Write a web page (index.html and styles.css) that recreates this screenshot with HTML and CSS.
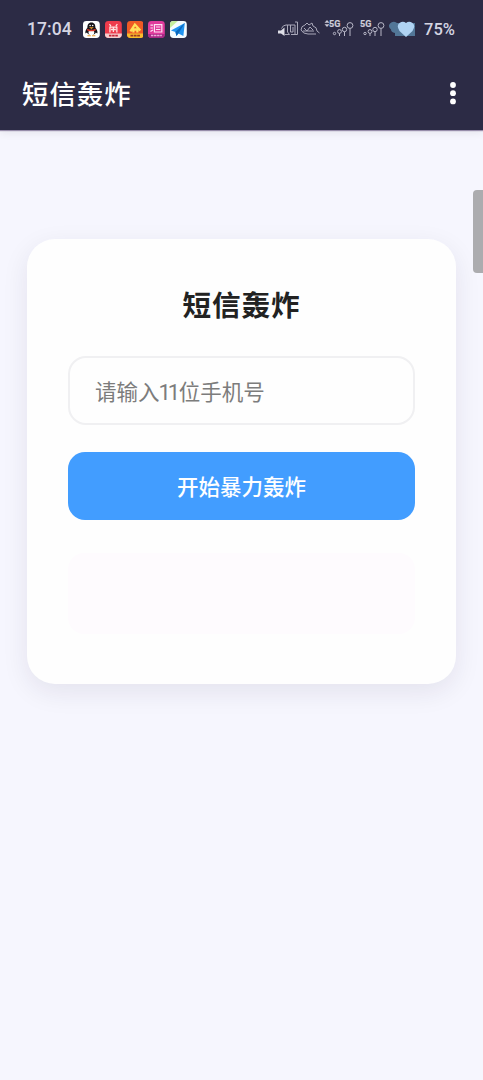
FILE: index.html
```
<!DOCTYPE html>
<html lang="zh-CN">
<head>
<meta charset="utf-8">
<title>短信轰炸</title>
<link rel="stylesheet" href="styles.css">
</head>
<body>
<header class="top">
  <div class="status">
    <span class="clock">17:04</span>
    <div class="apps">
      <svg class="app" viewBox="0 0 17 17"><rect width="17" height="17" rx="3.5" fill="#fff"/><path d="M8.500 1.500C5.500 1.500 4.300 4 4.500 6.500C3 8.500 1.900 10.500 2.500 12.500L4 11.500C5 14.800 12 14.800 13 11.500L14.500 12.500C15.100 10.500 14 8.500 12.500 6.500C12.700 4 11.500 1.500 8.500 1.500Z" fill="#17151a"/><ellipse cx="8.500" cy="11.500" rx="2.900" ry="2.700" fill="#fff"/><circle cx="7.200" cy="4.500" r=".8" fill="#fff"/><circle cx="9.800" cy="4.500" r=".8" fill="#fff"/><path d="M4.200 7.800Q8.500 10 12.800 7.800V9.500Q8.500 11.200 4.200 9.500Z" fill="#d8352b"/><path d="M6 6.300H11L8.500 8Z" fill="#f4a22b"/><path d="M4.500 14.800H7.900M9.100 14.800H12.500" stroke="#ed9a28" stroke-width="1.200"/></svg>
      <svg class="app" viewBox="0 0 17 17"><rect width="17" height="17" rx="3.500" fill="#ee3b4c"/><path d="M0 12.500H17V13.500Q17 17 13.500 17H3.500Q0 17 0 13.500Z" fill="#f5cfcf"/><path d="M4.500 3L6 5M12.500 3L11 5M5 5.500V11.500M12 5.500V11.500M5 6H12M6 8.500H11M8.500 6V11" stroke="#ffe3e1" stroke-width="1.300" fill="none"/><path d="M4 14.700H13" stroke="#c52234" stroke-width="2" stroke-dasharray="2.600 .6"/></svg>
      <svg class="app" viewBox="0 0 17 17"><rect width="17" height="17" rx="3.500" fill="#ee5a25"/><path d="M0 12.500H17V13.500Q17 17 13.500 17H3.500Q0 17 0 13.500Z" fill="#f7bd2c"/><path d="M3.500 10.500L8 3.500L13.500 9.500M6.500 11.500V8.500H10.500V11.500" stroke="#ffe05a" stroke-width="2.300" fill="none"/><path d="M3.500 14.700H13.500" stroke="#9d3821" stroke-width="2" stroke-dasharray="2.800 .6"/></svg>
      <svg class="app" viewBox="0 0 17 17"><rect width="17" height="17" rx="3.500" fill="#e03a9c"/><path d="M0 13H17V13.500Q17 17 13.500 17H3.500Q0 17 0 13.500Z" fill="#a82886"/><path d="M2.500 4H5M2.500 7H5M2.500 10.500L5 9M6.500 3.500H14V11H6.500ZM8 6H12.500M8 8.500H12.500" stroke="#ffe0f3" stroke-width="1.200" fill="none"/><path d="M3 14.500H14" stroke="#f1a8d8" stroke-width="1.500" stroke-dasharray="2.500 .6"/></svg>
      <svg class="app" viewBox="0 0 17 17"><rect width="17" height="17" rx="3.500" fill="#f5fcff"/><path d="M0 7V3.500Q0 0 3.500 0H8Z" fill="#c5ed9d"/><path d="M1 9.500L15 2L13.500 15L8.500 12.500L6.500 15L5.500 11Z" fill="#2093ef"/><path d="M5.500 11L15 2L8.500 12.500L6.500 15Z" fill="#0b68bd"/></svg>
    </div>
    <div class="signals">
      <svg class="mute" width="44" height="20" viewBox="0 0 44 20" fill="none" stroke="#aaa9ba" stroke-width="1"><path d="M1 11.500H4L7.500 8.500V17L4 14.500H1Z" fill="#dedee7" stroke="none"/><path d="M4.500 9.500Q6 6 9 6H18V15.500H14M12.500 15.500H7.500M10.500 6V13L12.500 15.500M13.500 6V13H16V8M18 3H20.500V15.500M14 15.500H20.500"/><path d="M24 11Q24 7 28 6L30 4L32 6L35 4L36 7Q40 8 40 12L42.500 14M24 11Q26 15 31 15H39M27 9L30 12L33 8L36 11M26 12H37"/></svg>
      <svg width="31" height="20" viewBox="0 0 31 20" fill="none" stroke="#b8b7c7"><path d="M.5 3.800L3 1L5.500 3.800ZM.5 5.200L3 8L5.500 5.200Z" fill="#c9c9d6" stroke="none"/><text class="net" x="5" y="8">5G</text><circle cx="10.500" cy="14.500" r="1.200"/><circle cx="15.500" cy="12.500" r="1.900"/><path d="M15.500 14.400V17"/><circle cx="20.500" cy="10.500" r="2.200"/><path d="M20.500 12.700V17"/><circle cx="26" cy="6.500" r="2.900"/><path d="M26 9.400V17"/></svg>
      <svg class="sim" width="27" height="20" viewBox="0 0 27 20" fill="none" stroke="#b8b7c7"><text class="net" x="1" y="8">5G</text><circle cx="6" cy="14.500" r="1.200"/><circle cx="11" cy="12.500" r="1.900"/><path d="M11 14.400V17"/><circle cx="16" cy="10.500" r="2.200"/><path d="M16 12.700V17"/><circle cx="22" cy="6.500" r="2.900"/><path d="M22 9.400V17"/></svg>
      <svg class="battery" width="28" height="18" viewBox="0 0 28 18"><path d="M2 3.500Q5 .5 9 3H27V16H7V13Q3 12 3 9.500Q-.5 6.500 2 3.500Z" fill="#527697"/><path d="M18 17L11.500 11Q8 5.500 11.500 3Q15 .5 18 3Q21 .5 24.500 3Q28 5.500 24.500 11Z" fill="#b0d3f3"/></svg>
      <span class="percent">75%</span>
    </div>
  </div>
  <div class="bar">
    <h1 class="app-title">短信轰炸</h1>
    <svg class="more" viewBox="0 0 8 24" fill="#fff"><circle cx="4" cy="4" r="2.900"/><circle cx="4" cy="12.200" r="2.900"/><circle cx="4" cy="20.400" r="2.900"/></svg>
  </div>
</header>
<main class="page">
  <section class="card">
    <h2 class="card-title">短信轰炸</h2>
    <div class="phone">请输入<span class="digits">11</span>位手机号</div>
    <button class="submit" type="button">开始暴力轰炸</button>
    <div class="result"></div>
  </section>
  <div class="scroll-thumb"></div>
</main>
</body>
</html>
```
FILE: styles.css
```
* { box-sizing: border-box; }
body {
  margin: 0;
  min-height: 1080px;
  background: #f6f6fe;
  font-family: "Noto Sans CJK SC", sans-serif;
}
.top {
  position: relative;
  height: 130px;
  background: #2c2b45;
  box-shadow: 0 1px 1px rgba(70, 50, 100, .5), 0 3px 8px rgba(0, 0, 0, .07);
}
.status {
  display: flex;
  align-items: center;
  height: 58px;
  padding: 0 28px 0 27px;
  color: #d5d5e2;
  font: 500 17.5px/20px Roboto, sans-serif;
}
.clock { width: 56px; letter-spacing: .1px; }
.apps { display: flex; gap: 5px; }
.app { display: block; width: 16.8px; height: 17px; }
.signals { display: flex; align-items: center; margin-left: auto; }
.signals svg { display: block; flex: none; }
.mute { margin-right: 3px; }
.net { fill: #d0d0dc; stroke: #d0d0dc; stroke-width: .2; font: 700 9px Roboto, sans-serif; }
.sim { margin-left: 4px; }
.battery { margin-left: 2px; }
.percent { margin-left: 8px; font-size: 16.5px; line-height: 22px; padding-top: 1px; }
.bar {
  display: flex;
  align-items: center;
  justify-content: space-between;
  height: 72px;
  padding: 0 26px 3px 22px;
}
.app-title { margin: 0; color: #fff; font-size: 26.4px; font-weight: 500; line-height: 40px; letter-spacing: 1px; }
.more { width: 8px; height: 24px; }
.page { position: relative; padding: 109px 27px 0; }
.card {
  display: flex;
  flex-direction: column;
  height: 445px;
  padding: 40px 41px 41px;
  border-radius: 28px;
  background: #fefefe;
  box-shadow: 0 8px 27px rgba(30, 25, 60, .085);
}
.card-title {
  margin: 0 0 28px;
  color: #222;
  font-size: 28.6px;
  font-weight: 700;
  line-height: 49px;
  letter-spacing: .9px;
  text-align: center;
}
.phone {
  height: 69px;
  padding: 0 25px;
  border: 2px solid #f0f0f2;
  border-radius: 18px;
  color: #7c7c7c;
  font-size: 21.5px;
  line-height: 66px;
}
.digits { font-family: Roboto, sans-serif; font-size: 22px; letter-spacing: -3.2px; margin: 0 2px 0 -1px; }
.submit {
  height: 68px;
  margin: 27px 0 33px;
  padding: 0 0 2px;
  border: 0;
  border-radius: 17px;
  background: #429dff;
  color: #fff;
  font: 500 21.5px "Noto Sans CJK SC", sans-serif;
}
.result { height: 81px; border-radius: 16px; background: #fefbfe; }
.scroll-thumb {
  position: absolute;
  top: 60px;
  right: 0;
  width: 10px;
  height: 83px;
  border-radius: 4px 0 0 4px;
  background: #acacaf;
}
```
